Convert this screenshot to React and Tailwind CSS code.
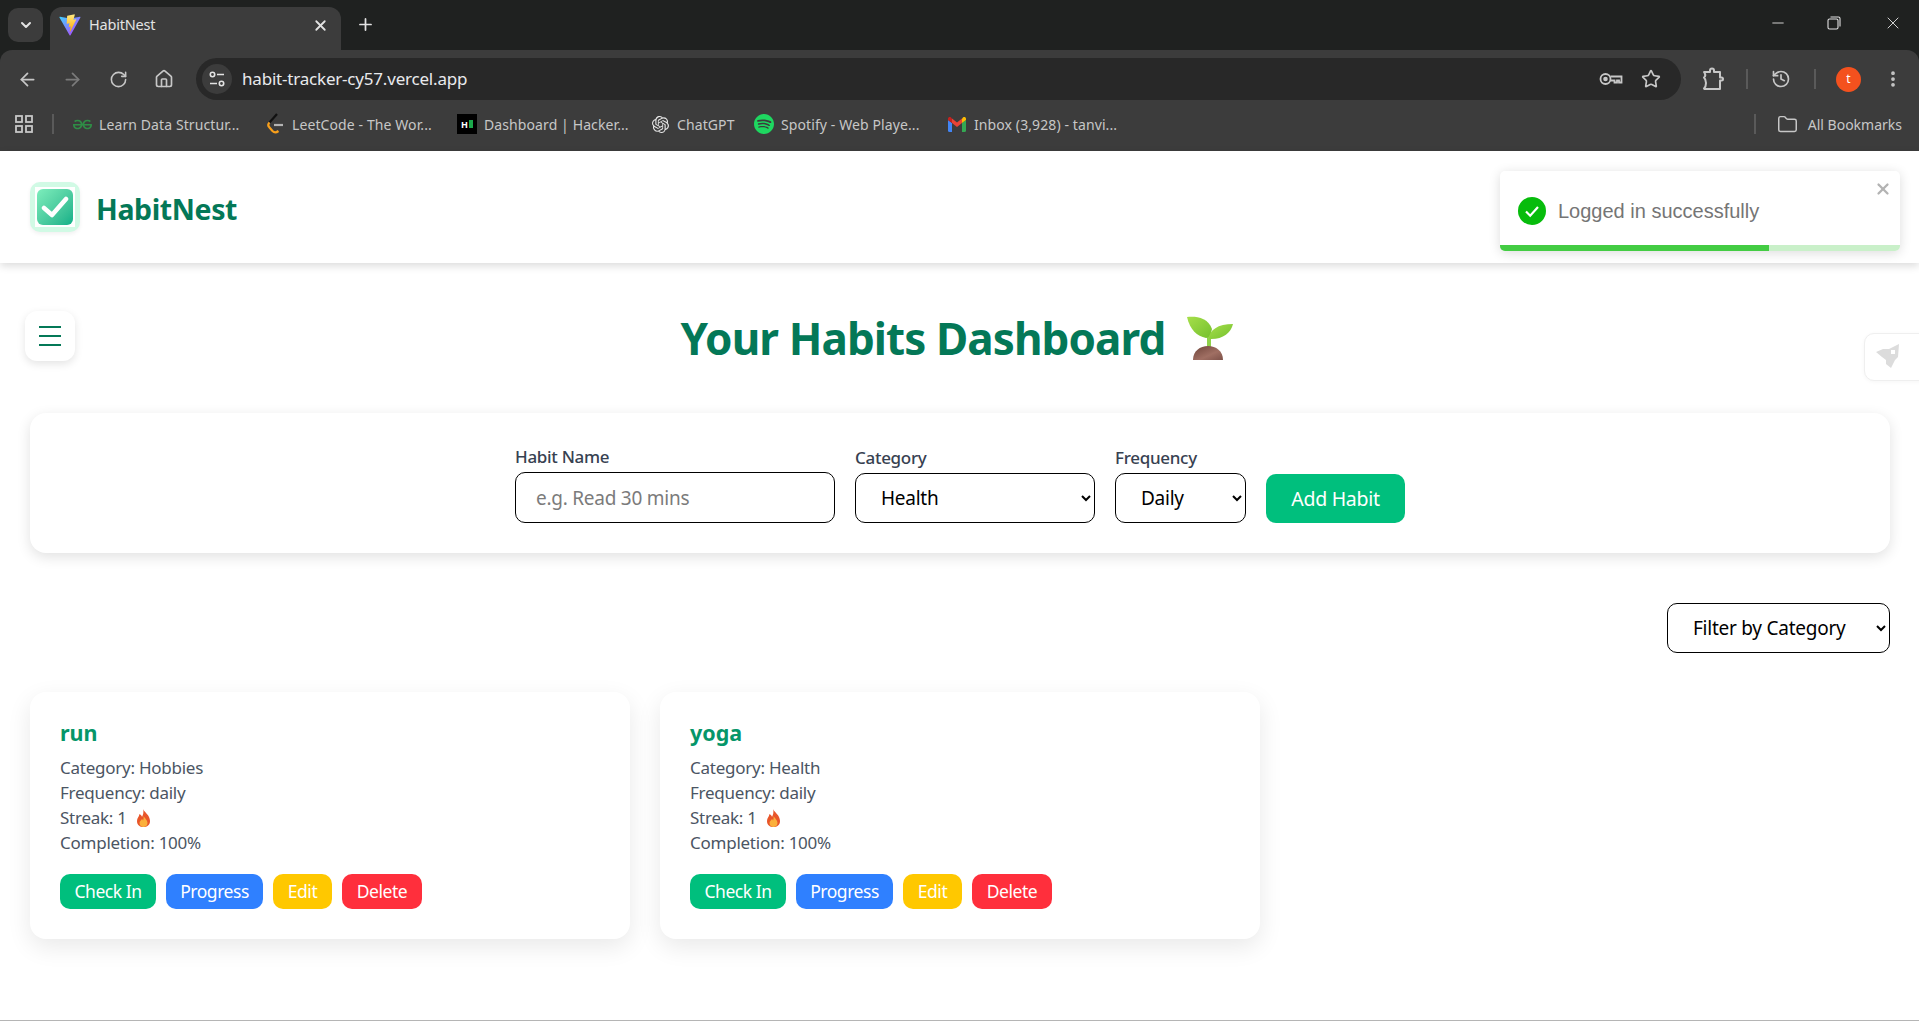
import { ArrowLeft, ArrowRight, RotateCw, Home, Star, History, Folder, ChevronDown, X, Plus, Minus, EllipsisVertical } from 'lucide-react';
import { SiGeeksforgeeks, SiOpenai, SiSpotify } from 'react-icons/si';

const uiFont = { fontFamily: '"Noto Sans", sans-serif' };

function ViteIcon() {
  return (
    <svg width="22" height="24" viewBox="0 0 410 404">
      <defs>
        <linearGradient id="viteA" x1="0" y1="0" x2="1" y2="1">
          <stop offset="0" stopColor="#41D1FF" />
          <stop offset="1" stopColor="#BD34FE" />
        </linearGradient>
        <linearGradient id="viteB" x1="0" y1="0" x2="0" y2="1">
          <stop offset="0" stopColor="#FFEA83" />
          <stop offset="1" stopColor="#FFA800" />
        </linearGradient>
      </defs>
      <path d="M399 63 215 392c-4 7-14 7-18 0L9 63c-4-7 2-16 11-15l184 33h7l180-33c9-1 12 8 8 15Z" fill="url(#viteA)" />
      <path d="M292 1 156 28c-2 0-4 2-4 5l-8 141c0 3 3 6 6 5l38-9c4-1 7 2 6 6l-11 55c-1 4 3 7 6 6l23-7c4-1 7 2 6 6l-18 85c-1 5 6 8 9 4l2-3 109-218c2-4-1-8-5-7l-39 7c-4 1-7-3-6-6l25-88c1-4-2-7-6-6Z" fill="url(#viteB)" />
    </svg>
  );
}

function TuneIcon() {
  return (
    <svg width="18" height="18" viewBox="0 0 18 18" fill="none" stroke="#e3e3e3" strokeWidth="1.6">
      <circle cx="4.5" cy="4.5" r="2.2" />
      <path d="M9 4.5h7M2 13.5h7" />
      <circle cx="13.5" cy="13.5" r="2.2" />
    </svg>
  );
}

function KeyIcon() {
  return (
    <svg width="24" height="16" viewBox="0 0 24 16" fill="none" stroke="#c7c7c7" strokeWidth="1.8">
      <circle cx="6.5" cy="8" r="5" />
      <circle cx="6.5" cy="8" r="1.4" fill="#c7c7c7" />
      <path d="M11.5 5.5h11v6h-2.5v-2h-2v2h-2.5v-2h-4" />
    </svg>
  );
}

function ExtensionIcon() {
  return (
    <svg width="22" height="24" viewBox="0 0 22 24" fill="none" stroke="#c7c7c7" strokeWidth="2" strokeLinejoin="round" className="ml-[21px]">
      <path d="M2 5h6V3.500a2 2 0 0 1 4 0V5h6v5.500h1.500a1.500 1.500 0 0 1 0 3H18V22H2.500l-.5-.5c2-2 2-4.500 2-5.500s0-3.500-2-5.500c1.500-1 2-2.500 0-5.500Z" />
    </svg>
  );
}

function LeetCodeIcon() {
  return (
    <svg width="18" height="22" viewBox="0 0 18 22" fill="none" strokeWidth="2.2">
      <path d="M11 1 3.500 9.500" stroke="#111" />
      <path d="M3.500 9.500c-1.500 1.500-1.500 3.500 0 5l3 3.500c1.500 1.500 4 1.500 6 0" stroke="#f89f1b" />
      <path d="M8 12h9" stroke="#b3b3b3" />
    </svg>
  );
}

function GmailIcon() {
  return (
    <svg width="18" height="15" viewBox="0 0 18 15">
      <path d="M0 3v10.500a1.500 1.500 0 0 0 1.500 1.500H4V6Z" fill="#4285f4" />
      <path d="M14 6v9h2.500a1.500 1.500 0 0 0 1.500-1.500V3Z" fill="#34a853" />
      <path d="M0 3V2c0-2 2-2.500 3-1.500L4 1.500V6Z" fill="#c5221f" />
      <path d="M4 1.500 9 5.500l5-4V6L9 10 4 6Z" fill="#ea4335" />
      <path d="M14 1.500l1-1C16-.5 18 0 18 2v1l-4 3Z" fill="#fbbc04" />
    </svg>
  );
}

function SeedlingIcon() {
  return (
    <svg width="46" height="46" viewBox="0 0 46 46" className="mt-[2px]">
      <defs>
        <linearGradient id="leaf" x1="0" y1="0" x2="1" y2="1">
          <stop offset="0" stopColor="#a6df4a" />
          <stop offset="1" stopColor="#74c02e" />
        </linearGradient>
        <linearGradient id="mound" x1="0" y1="0" x2="1" y2="1">
          <stop offset="0" stopColor="#6d4339" />
          <stop offset="0.6" stopColor="#a06f63" />
          <stop offset="1" stopColor="#7d5149" />
        </linearGradient>
      </defs>
      <path d="M22 11v20" stroke="#8fd24a" strokeWidth="4" fill="none" />
      <path d="M0 1c8-1 21 0 25 12-1 5-3 9-6 9C10 20 3 14 0 1Z" fill="url(#leaf)" />
      <path d="M22 23c0-9 9-15 24-15-2 9-11 16-24 15Z" fill="url(#leaf)" />
      <path d="M6 44c0-9 7-14 15-14s15 5 15 14Z" fill="url(#mound)" />
    </svg>
  );
}

function FlameIcon() {
  return (
    <svg width="15" height="18" viewBox="0 0 15 18" className="ml-[9px] inline-block align-[-3px]">
      <path d="M7 0c1 3 7 6 7 12 0 4-3 6-6.500 6S1 16 1 12c0-3 2-4 2.500-7C5 6 6 7 6 8c1-2 2-5 1-8Z" fill="#e8562a" />
      <path d="M7.500 7c1 2 4 4 4 7 0 2.500-2 4-4 4s-4-1.500-4-4c0-2 2-3 2.500-4 .5.500 1 1 1 1.500.5-1 .8-2.500.5-4.500Z" fill="#fbb03b" />
    </svg>
  );
}

function Bookmark({ icon, text, className }) {
  return (
    <div className={`flex items-center text-[#c7c7c7] ${className}`}>
      <div className="flex w-[20px] justify-center">{icon}</div>
      <span className="ml-[7px] whitespace-nowrap text-[14px] tracking-[0.1px]">{text}</span>
    </div>
  );
}

function BrowserChrome() {
  return (
    <div style={uiFont} className="shrink-0 bg-[#1f2120]">
      <div className="flex h-[50px] items-end">
        <div className="mb-[8px] ml-[8px] flex h-[34px] w-[35px] items-center justify-center rounded-[10px] bg-[#3c3c3c]">
          <ChevronDown size={16} strokeWidth={3} className="text-[#e3e3e3]" />
        </div>
        <div className="ml-[7px] flex h-[43px] w-[291px] items-center rounded-t-[12px] bg-[#3c3c3c] pb-[7px] pl-[9px] pr-[12px] text-[14.500px] text-[#e3e3e3]">
          <ViteIcon />
          <span className="ml-[8px] flex-1 tracking-[-0.2px]">HabitNest</span>
          <X size={17} strokeWidth={2.5} />
        </div>
        <Plus size={19} strokeWidth={2.2} className="mb-[16px] ml-[15px] text-[#e3e3e3]" />
        <div className="flex-1" />
        <div className="mb-[17px] flex items-center text-[#e3e3e3]">
          <Minus size={18} strokeWidth={1.2} />
          <svg width="14" height="14" viewBox="0 0 14 14" fill="none" stroke="#e3e3e3" strokeWidth="1.100" className="ml-[40px]">
            <rect x="1" y="3" width="10" height="10" rx="1.500" />
            <path d="M3.500 1h8a1.500 1.500 0 0 1 1.500 1.500v8" />
          </svg>
          <X size={20} strokeWidth={1.1} className="ml-[42px] mr-[16px]" />
        </div>
      </div>

      <div className="flex h-[50px] items-start rounded-t-[12px] bg-[#3c3c3c] text-[#c7c7c7]">
        <div className="flex h-[58px] items-center">
          <ArrowLeft size={21} className="ml-[17px]" />
          <ArrowRight size={21} className="ml-[24px] text-[#7b7b7b]" />
          <RotateCw size={19} className="ml-[26px]" />
          <Home size={20} className="ml-[26px]" />
        </div>
        <div className="ml-[22px] mt-[8px] flex h-[42px] w-[1485px] items-center rounded-full bg-[#282828] pl-[6px] pr-[20px]">
          <div className="flex h-[30px] w-[30px] items-center justify-center rounded-full bg-[#3c3c3c]">
            <TuneIcon />
          </div>
          <span className="ml-[10px] flex-1 text-[17px] tracking-[-0.2px] text-[#e8eaed]">habit-tracker-cy57.vercel.app</span>
          <KeyIcon />
          <Star size={20} className="ml-[18px]" />
        </div>
        <div className="flex h-[58px] items-center">
          <ExtensionIcon />
          <div className="ml-[22px] h-[20px] w-[2px] bg-[#5a5a5a]" />
          <History size={20} className="ml-[23px]" />
          <div className="ml-[23px] h-[20px] w-[2px] bg-[#5a5a5a]" />
          <div className="ml-[20px] flex h-[25px] w-[25px] items-center justify-center rounded-full bg-[#f4511e] text-[12px] text-white">t</div>
          <EllipsisVertical size={20} strokeWidth={2.5} className="ml-[22px]" />
        </div>
      </div>

      <div className="flex h-[51px] items-center border-b border-[#3c3c3c] bg-[#3c3c3c] pb-[2px]">
        <svg width="18" height="18" viewBox="0 0 18 18" fill="none" stroke="#c7c7c7" strokeWidth="1.800" className="ml-[15px]">
          <rect x="1" y="1" width="6" height="6" />
          <rect x="11" y="1" width="6" height="6" />
          <rect x="1" y="11" width="6" height="6" />
          <rect x="11" y="11" width="6" height="6" />
        </svg>
        <div className="ml-[19px] mr-[18px] h-[20px] w-[2px] bg-[#5a5a5a]" />
        <Bookmark className="w-[193px]" icon={<SiGeeksforgeeks size={19} color="#2f8d46" />} text="Learn Data Structur..." />
        <Bookmark className="w-[192px]" icon={<LeetCodeIcon />} text="LeetCode - The Wor..." />
        <Bookmark
          className="w-[193px]"
          icon={
            <div className="flex h-[20px] w-[20px] items-center justify-center gap-[1px] bg-black">
              <span className="text-[9px] font-bold leading-none text-white">H</span>
              <span className="h-[8px] w-[4px] bg-[#1ba94c]" />
            </div>
          }
          text="Dashboard | Hacker..."
        />
        <Bookmark className="w-[104px]" icon={<SiOpenai size={17} color="#e8e8e8" />} text="ChatGPT" />
        <Bookmark className="w-[193px]" icon={<SiSpotify size={20} color="#1ed760" />} text="Spotify - Web Playe..." />
        <Bookmark icon={<GmailIcon />} text="Inbox (3,928) - tanvi..." />
        <div className="flex-1" />
        <div className="h-[20px] w-[2px] bg-[#5a5a5a]" />
        <Folder size={21} strokeWidth={1.700} className="ml-[21px]" color="#c7c7c7" />
        <span className="ml-[10px] mr-[17px] text-[14px] tracking-[0px] text-[#c7c7c7]">All Bookmarks</span>
      </div>
    </div>
  );
}

function HabitCard({ name, category }) {
  return (
    <div className="h-[247px] w-[600px] rounded-[16px] bg-white pl-[30px] pt-[26px] shadow-[0_8px_24px_rgba(0,0,0,0.09)]">
      <h3 className="text-[21.500px] font-bold leading-[30px] text-[#059669]">{name}</h3>
      <div className="mt-[7px] text-[17px] leading-[25px] tracking-[-0.25px] text-[#4b5563]">
        <p>Category: {category}</p>
        <p>Frequency: daily</p>
        <p>
          Streak: 1<FlameIcon />
        </p>
        <p>Completion: 100%</p>
      </div>
      <div className="mt-[19px] flex gap-[10px] text-[17.500px] tracking-[-0.45px] text-white">
        <button className="h-[35px] w-[96px] rounded-[10px] bg-[#00bf7d]">Check In</button>
        <button className="h-[35px] w-[97px] rounded-[10px] bg-[#2f80ff]">Progress</button>
        <button className="h-[35px] w-[59px] rounded-[10px] bg-[#ffc800]">Edit</button>
        <button className="h-[35px] w-[80px] rounded-[10px] bg-[#ff2f3c]">Delete</button>
      </div>
    </div>
  );
}

function App() {
  return (
    <div style={uiFont} className="relative flex h-[1021px] flex-col overflow-hidden bg-white">
      <BrowserChrome />

      <header className="flex h-[112px] shrink-0 items-center bg-white pl-[30px] shadow-[0_3px_8px_rgba(0,0,0,0.14)]">
        <div className="flex h-[50px] w-[50px] items-center justify-center rounded-[10px] bg-[#d1fae5] shadow-[0_2px_4px_rgba(0,0,0,0.06)]">
          <div className="flex h-[40px] w-[40px] items-center justify-center bg-white">
            <div className="flex h-[36px] w-[36px] items-center justify-center rounded-[6px] bg-gradient-to-br from-[#7ceebc] to-[#05b088]">
              <svg width="28" height="24" viewBox="0 0 28 24" fill="none" stroke="white" strokeWidth="4.500" strokeLinecap="round" strokeLinejoin="round">
                <path d="M3 13l8 7L25 4" />
              </svg>
            </div>
          </div>
        </div>
        <span className="ml-[16px] mt-[4px] text-[28.500px] font-bold tracking-[-0.4px] text-[#047857]">HabitNest</span>
      </header>

      <main className="flex-1 pl-[30px] pr-[29px]">
        <div className="mt-[48px] grid grid-cols-[1fr_auto_1fr] items-center pr-[6px]">
          <button className="-ml-[5px] flex h-[50px] w-[50px] flex-col items-center justify-center gap-[7px] self-start rounded-[12px] bg-white shadow-[0_3px_8px_rgba(0,0,0,0.11)]">
            <span className="h-[2px] w-[22px] bg-[#047857]" />
            <span className="h-[2px] w-[22px] bg-[#047857]" />
            <span className="h-[2px] w-[22px] bg-[#047857]" />
          </button>
          <div className="flex items-center">
            <h1 className="text-[44px] font-bold leading-[54px] tracking-[-0.9px] text-[#047857]">Your Habits Dashboard</h1>
            <div className="ml-[22px]">
              <SeedlingIcon />
            </div>
          </div>
          <div />
        </div>

        <section className="mt-[48px] flex h-[140px] items-end justify-center gap-[20px] rounded-[16px] bg-white pb-[30px] shadow-[0_4px_14px_rgba(0,0,0,0.12)]">
          <label className="flex flex-col">
            <span className="mb-[3px] text-[17px] font-medium leading-[24px] tracking-[-0.3px] text-[#374151]">Habit Name</span>
            <input
              placeholder="e.g. Read 30 mins"
              className="h-[51px] w-[320px] rounded-[10px] border border-black px-[20px] text-[19px] tracking-[-0.25px] placeholder:text-[#7b7b7b]"
            />
          </label>
          <label className="flex flex-col">
            <span className="mb-[3px] text-[17px] font-medium leading-[24px] tracking-[-0.3px] text-[#374151]">Category</span>
            <select className="h-[50px] w-[240px] rounded-[10px] border border-black bg-white px-[21px] text-[19px] tracking-[-0.25px] text-black">
              <option>Health</option>
            </select>
          </label>
          <label className="flex flex-col">
            <span className="mb-[3px] text-[17px] font-medium leading-[24px] tracking-[-0.3px] text-[#374151]">Frequency</span>
            <select className="h-[50px] w-[131px] rounded-[10px] border border-black bg-white px-[21px] text-[19px] tracking-[-0.25px] text-black">
              <option>Daily</option>
            </select>
          </label>
          <button className="h-[49px] w-[139px] rounded-[10px] bg-[#00bf7d] text-[19.500px] tracking-[-0.3px] text-white">Add Habit</button>
        </section>

        <div className="mt-[50px] flex justify-end">
          <select className="h-[50px] w-[223px] rounded-[10px] border border-black bg-white px-[21px] text-[19px] tracking-[-0.25px] text-black">
            <option>Filter by Category</option>
          </select>
        </div>

        <div className="mt-[39px] flex gap-[30px]">
          <HabitCard name="run" category="Hobbies" />
          <HabitCard name="yoga" category="Health" />
        </div>
      </main>

      <div className="h-[1px] shrink-0 bg-[#b5b5b5]" />

      {/* toast */}
      <div
        style={{ fontFamily: '"Liberation Sans", sans-serif' }}
        className="absolute left-[1500px] top-[171px] h-[80px] w-[400px] overflow-hidden rounded-[5px] bg-white shadow-[0_2px_12px_rgba(0,0,0,0.14)]"
      >
        <div className="flex h-[74px] items-center pl-[18px] pt-[5px]">
          <svg width="28" height="28" viewBox="0 0 28 28">
            <circle cx="14" cy="14" r="14" fill="#07bc0c" />
            <path d="M8 14.500l4.200 4.200L20 10" fill="none" stroke="white" strokeWidth="2.200" />
          </svg>
          <span className="ml-[12px] text-[20px] text-[#757575]">Logged in successfully</span>
        </div>
        <X size={18} strokeWidth={3} className="absolute right-[8px] top-[9px] text-[#b3b3b3]" />
        <div className="flex h-[6px] bg-[#c9f0c9]">
          <div className="h-full w-[269px] bg-[#43cc43]" />
        </div>
      </div>

      {/* side widget */}
      <div className="absolute left-[1864px] top-[333px] flex h-[48px] w-[70px] items-center rounded-l-[10px] border border-[#efefef] bg-white pl-[9px] shadow-[0_1px_4px_rgba(0,0,0,0.04)]">
        <svg width="30" height="30" viewBox="0 0 30 30">
          <path d="M25 2 24 15 21 18 17 26 12 22V18L8 15 2 10 9 7H15Z" fill="#dcdcdc" />
          <rect x="17" y="8" width="4" height="4" fill="white" />
        </svg>
      </div>
    </div>
  );
}

export default App;
